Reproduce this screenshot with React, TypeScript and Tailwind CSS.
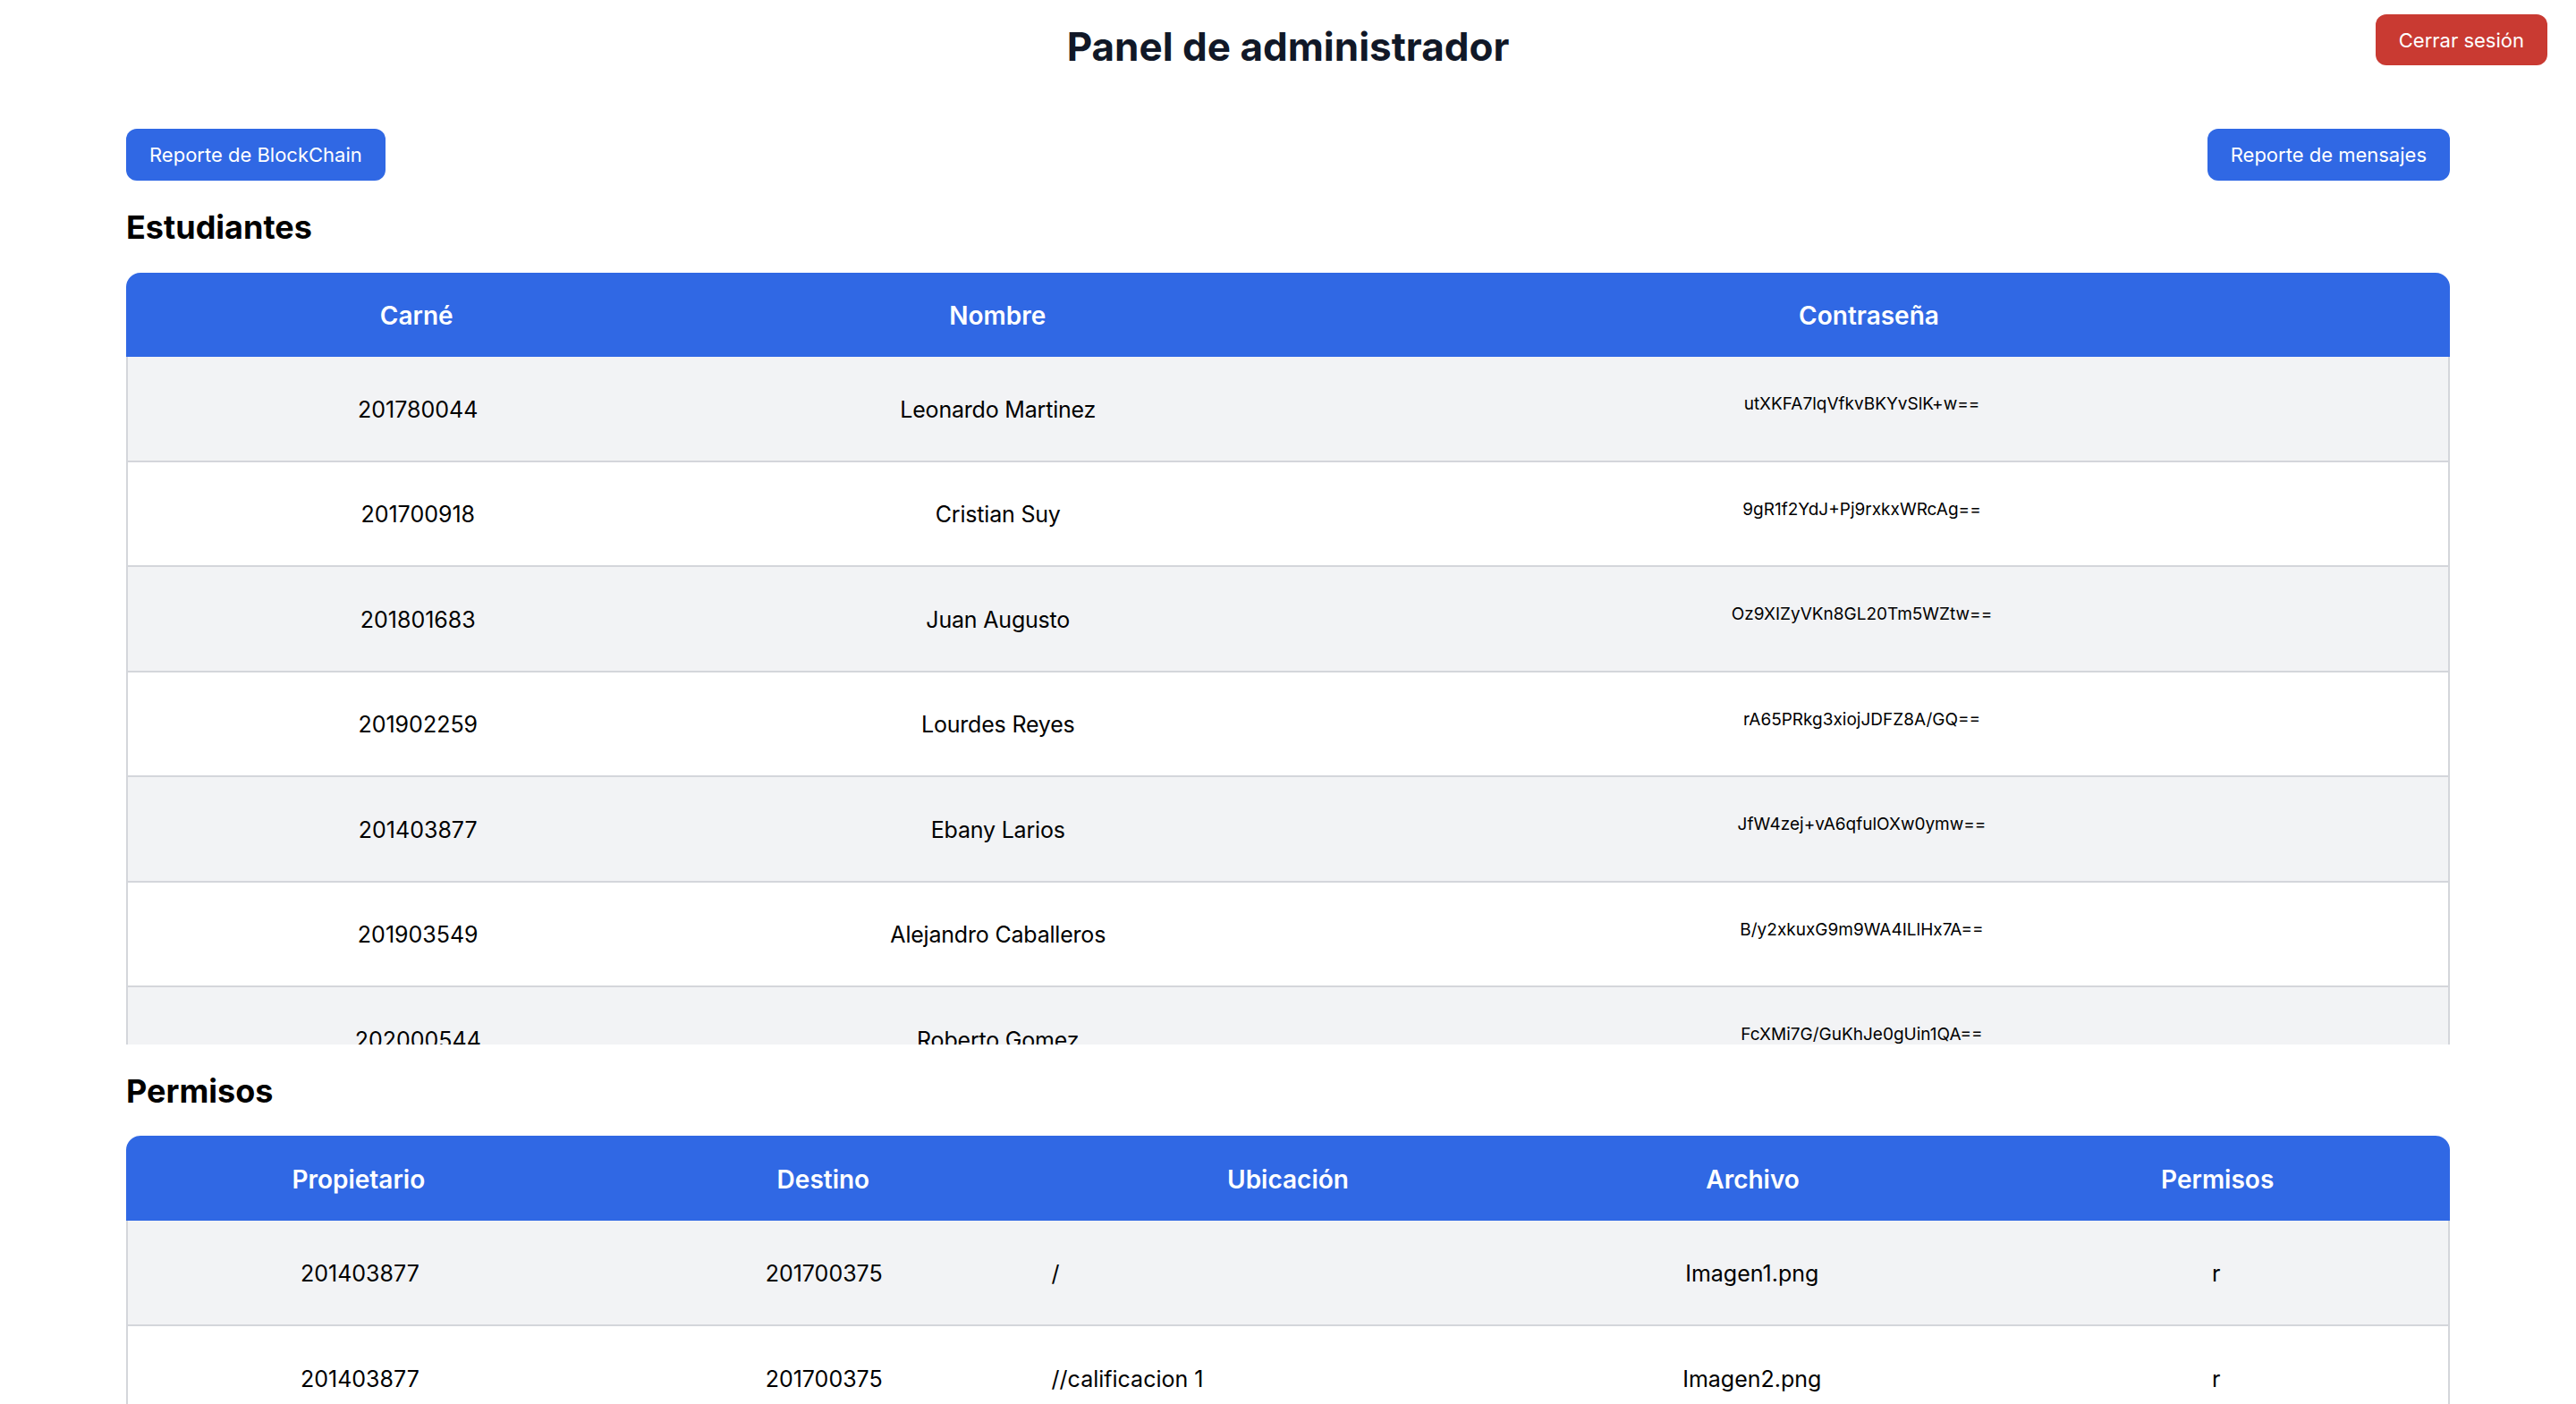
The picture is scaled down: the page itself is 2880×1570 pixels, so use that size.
import React from 'react';

type Student = { carne: string; nombre: string; password: string };
type Permiso = { propietario: string; destino: string; ubicacion: string; archivo: string; permisos: string };

const students: Student[] = [
  { carne: '201780044', nombre: 'Leonardo Martinez', password: 'utXKFA7lqVfkvBKYvSlK+w==' },
  { carne: '201700918', nombre: 'Cristian Suy', password: '9gR1f2YdJ+Pj9rxkxWRcAg==' },
  { carne: '201801683', nombre: 'Juan Augusto', password: 'Oz9XIZyVKn8GL20Tm5WZtw==' },
  { carne: '201902259', nombre: 'Lourdes Reyes', password: 'rA65PRkg3xiojJDFZ8A/GQ==' },
  { carne: '201403877', nombre: 'Ebany Larios', password: 'JfW4zej+vA6qfulOXw0ymw==' },
  { carne: '201903549', nombre: 'Alejandro Caballeros', password: 'B/y2xkuxG9m9WA4ILlHx7A==' },
  { carne: '202000544', nombre: 'Roberto Gomez', password: 'FcXMi7G/GuKhJe0gUin1QA==' },
  { carne: '201612345', nombre: 'Maria Lopez', password: 'k2LmP9qRs7TuVw1XyZ3aBc==' },
];

const permisos: Permiso[] = [
  { propietario: '201403877', destino: '201700375', ubicacion: '/', archivo: 'Imagen1.png', permisos: 'r' },
  { propietario: '201403877', destino: '201700375', ubicacion: '//calificacion 1', archivo: 'Imagen2.png', permisos: 'r' },
];

const Button: React.FC<{ label: string; color: 'blue' | 'red' }> = ({ label, color }) => (
  <button
    className={
      color === 'red'
        ? 'h-[57px] px-[26px] rounded-[12px] bg-[#c93a32] text-white text-[22px] leading-none'
        : 'h-[58px] px-[26px] rounded-[12px] bg-[#3068e4] text-white text-[22px] leading-none'
    }
  >
    {label}
  </button>
);

export default function App() {
  return (
    <div className="min-h-screen bg-white font-['Inter','Noto_Sans',sans-serif] text-black">
      <header className="grid grid-cols-[1fr_auto_1fr] items-start pt-[16px] px-[32px]">
        <div />
        <h1 className="text-[44px] leading-[72px] font-bold text-[#111827]">Panel de administrador</h1>
        <div className="flex justify-end">
          <Button label="Cerrar sesión" color="red" />
        </div>
      </header>

      <main className="px-[141px]">
        <div className="flex justify-between items-center mt-[56px]">
          <Button label="Reporte de BlockChain" color="blue" />
          <Button label="Reporte de mensajes" color="blue" />
        </div>

        <h2 className="mt-[24px] mb-[23px] text-[36px] leading-[56px] font-bold">Estudiantes</h2>

        <div className="h-[863px] overflow-hidden rounded-t-[16px]">
          <div className="grid grid-cols-[1fr_1fr_2fr] items-center h-[94px] pt-[2px] bg-[#3068e4] text-white text-[28px] font-semibold text-center">
            <div>Carné</div>
            <div>Nombre</div>
            <div>Contraseña</div>
          </div>
          {students.map((s, i) => (
            <div
              key={s.carne}
              className={
                i % 2 === 0
                  ? 'grid grid-cols-[1fr_1fr_2fr] items-center h-[117.5px] pt-[3px] border-x-2 border-b-2 border-[#d4d6db] bg-[#f2f3f5] text-center text-[25px]'
                  : 'grid grid-cols-[1fr_1fr_2fr] items-center h-[117.5px] pt-[3px] border-x-2 border-b-2 border-[#d4d6db] bg-white text-center text-[25px]'
              }
            >
              <div>{s.carne}</div>
              <div className="tracking-[-0.2px]">{s.nombre}</div>
              <div className="text-[19px] pb-[12px] pr-[14px]">{s.password}</div>
            </div>
          ))}
        </div>

        <h2 className="mt-[24px] mb-[22px] text-[36px] leading-[56px] font-bold">Permisos</h2>

        <div className="rounded-t-[16px] overflow-hidden">
          <div className="grid grid-cols-5 items-center h-[95px] pt-[2px] bg-[#3068e4] text-white text-[28px] font-semibold text-center">
            <div>Propietario</div>
            <div>Destino</div>
            <div>Ubicación</div>
            <div>Archivo</div>
            <div>Permisos</div>
          </div>
          {permisos.map((p, i) => (
            <div
              key={p.archivo}
              className={
                i % 2 === 0
                  ? 'grid grid-cols-5 items-center h-[117.5px] pt-[4px] border-x-2 border-b-2 border-[#d4d6db] bg-[#f2f3f5] text-center text-[25px]'
                  : 'grid grid-cols-5 items-center h-[117.5px] pt-[4px] border-x-2 border-b-2 border-[#d4d6db] bg-white text-center text-[25px]'
              }
            >
              <div>{p.propietario}</div>
              <div>{p.destino}</div>
              <div className="text-left -ml-[5px]">{p.ubicacion}</div>
              <div>{p.archivo}</div>
              <div>{p.permisos}</div>
            </div>
          ))}
        </div>
      </main>
    </div>
  );
}
